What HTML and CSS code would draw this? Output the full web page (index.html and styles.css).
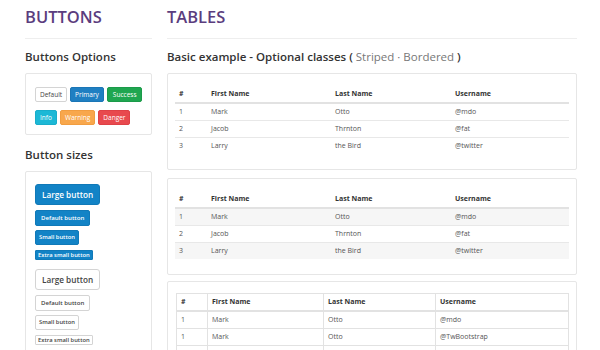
FILE: index.html
```html
<!DOCTYPE html>
<html lang="en">
<head>
  <meta charset="UTF-8" />
  <title>UI Elements | Buttons &amp; Tables</title>
  <link rel="stylesheet" href="styles.css">
</head>
<body>
  <div class="page">
    <div class="col-left">
      <h1 class="section-title">BUTTONS</h1>

      <h2 class="block-title">Buttons Options</h2>
      <div class="panel panel-options">
        <button class="btn btn-default">Default</button>
        <button class="btn btn-primary">Primary</button>
        <button class="btn btn-success">Success</button>
        <button class="btn btn-info">Info</button>
        <button class="btn btn-warning">Warning</button>
        <button class="btn btn-danger">Danger</button>
      </div>

      <h2 class="block-title">Button sizes</h2>
      <div class="panel panel-sizes">
        <button class="btn btn-blue btn-lg">Large button</button>
        <button class="btn btn-blue btn-md">Default button</button>
        <button class="btn btn-blue btn-sm">Small button</button>
        <button class="btn btn-blue btn-xs">Extra small button</button>
        <button class="btn btn-default btn-lg">Large button</button>
        <button class="btn btn-default btn-md">Default button</button>
        <button class="btn btn-default btn-sm">Small button</button>
        <button class="btn btn-default btn-xs">Extra small button</button>
      </div>
    </div>

    <div class="col-right">
      <h1 class="section-title">TABLES</h1>

      <h2 class="block-title">Basic example - Optional classes ( <span class="muted">Striped · Bordered</span> )</h2>

      <div class="panel panel-table">
        <table class="table">
          <thead>
            <tr><th class="c-num">#</th><th class="c-first">First Name</th><th class="c-last">Last Name</th><th>Username</th></tr>
          </thead>
          <tbody>
            <tr><td>1</td><td>Mark</td><td>Otto</td><td>@mdo</td></tr>
            <tr><td>2</td><td>Jacob</td><td>Thrnton</td><td>@fat</td></tr>
            <tr><td>3</td><td>Larry</td><td>the Bird</td><td>@twitter</td></tr>
          </tbody>
        </table>
      </div>

      <div class="panel panel-table panel-striped">
        <table class="table table-striped">
          <thead>
            <tr><th class="c-num">#</th><th class="c-first">First Name</th><th class="c-last">Last Name</th><th>Username</th></tr>
          </thead>
          <tbody>
            <tr><td>1</td><td>Mark</td><td>Otto</td><td>@mdo</td></tr>
            <tr><td>2</td><td>Jacob</td><td>Thrnton</td><td>@fat</td></tr>
            <tr><td>3</td><td>Larry</td><td>the Bird</td><td>@twitter</td></tr>
          </tbody>
        </table>
      </div>

      <div class="panel panel-table panel-bordered">
        <table class="table table-bordered">
          <thead>
            <tr><th class="b-num">#</th><th class="b-first">First Name</th><th class="b-last">Last Name</th><th>Username</th></tr>
          </thead>
          <tbody>
            <tr><td>1</td><td>Mark</td><td>Otto</td><td>@mdo</td></tr>
            <tr><td>1</td><td>Mark</td><td>Otto</td><td>@TwBootstrap</td></tr>
            <tr><td>2</td><td>Jacob</td><td>Thornton</td><td>@fat</td></tr>
          </tbody>
        </table>
      </div>
    </div>
  </div>
</body>
</html>
```

FILE: styles.css
```css
body {
  margin: 0;
  background: #fff;
  font-family: 'Open Sans', 'Noto Sans', sans-serif;
  color: #333;
  height: 350px;
  overflow: hidden;
}
.page {
  display: flex;
  gap: 15px;
  padding-left: 25px;
}
.col-left {
  width: 127px;
  flex-shrink: 0;
}
.col-right {
  width: 410px;
  flex-shrink: 0;
}
.section-title {
  margin: 0;
  padding: 3px 0 7px;
  font-size: 16.5px;
  line-height: 28px;
  font-weight: 600;
  color: #5b3d7e;
  border-bottom: 1px solid #eee;
}
.block-title {
  margin: 9px 0 7px;
  font-size: 11.5px;
  line-height: 18px;
  font-weight: 600;
  color: #333;
  white-space: nowrap;
}
.block-title .muted {
  color: #777;
  font-weight: 400;
}
.panel {
  border: 1px solid #e6e6e6;
  border-radius: 2px;
  background: #fff;
  box-sizing: border-box;
}
.panel-options {
  display: flex;
  flex-wrap: wrap;
  gap: 8px 3px;
  padding: 13px 4px 9px 9px;
  margin-bottom: 11px;
}
.panel-sizes {
  display: flex;
  flex-direction: column;
  align-items: flex-start;
  padding: 12px 9px 10px;
  height: 200px;
}

/* botões */
.btn {
  font-family: inherit;
  font-size: 6.5px;
  line-height: 13px;
  padding: 0 4px;
  border: 1px solid transparent;
  border-radius: 2px;
  color: #fff;
  cursor: pointer;
  white-space: nowrap;
}
.btn-default {
  background: #fff;
  border-color: #d4d4d4;
  color: #444;
}
.btn-primary { background: #1f7fc2; border-color: #1b76b6; }
.btn-success { background: #1fa650; border-color: #1b9a49; padding: 0 5px; }
.btn-info { background: #1cb8d6; border-color: #19adca; }
.btn-warning { background: #f8a74c; border-color: #f19d40; }
.btn-danger { background: #e8494e; border-color: #de4146; }
.btn-blue { background: #1283c6; border-color: #1079b8; }

.panel-sizes .btn { font-weight: 600; }
.btn-lg {
  font-size: 8.2px;
  line-height: 19px;
  padding: 0 6px;
  border-radius: 3px;
  margin-bottom: 5px;
}
.btn-md {
  font-size: 6.1px;
  line-height: 14px;
  padding: 0 5px;
  margin-bottom: 4px;
}
.btn-sm {
  font-size: 5.8px;
  line-height: 13px;
  padding: 0 3px;
  margin-bottom: 5px;
}
.btn-xs {
  font-size: 5.8px;
  line-height: 8px;
  padding: 0 2px;
  border-radius: 1px;
  margin-bottom: 9px;
}

/* tabelas */
.panel-table {
  padding: 12px 7px 15px;
  margin-bottom: 8px;
}
.panel-striped {
  margin-bottom: 6px;
}
.panel-bordered {
  padding: 11px 7px 15px 8px;
}
.table {
  width: 100%;
  border-collapse: collapse;
  font-size: 7px;
  color: #555;
}
.table th,
.table td {
  height: 16px;
  padding: 0 4px;
  line-height: 10px;
  text-align: left;
  vertical-align: middle;
  border-top: 1px solid #e8e8e8;
}
.table thead th {
  border-top: none;
  border-bottom: 2px solid #e2e2e2;
  font-weight: 700;
  color: #333;
}
.c-num { width: 24px; }
.c-first { width: 116px; }
.c-last { width: 112px; }
.table-striped tbody tr:nth-child(odd) {
  background: #f6f6f6;
}
.table-bordered th,
.table-bordered td {
  border: 1px solid #e2e2e2;
}
.table-bordered thead th {
  border-top: 1px solid #e2e2e2;
  border-bottom: 2px solid #e2e2e2;
}
.b-num { width: 22px; }
.b-first { width: 107px; }
.b-last { width: 103px; }
```
